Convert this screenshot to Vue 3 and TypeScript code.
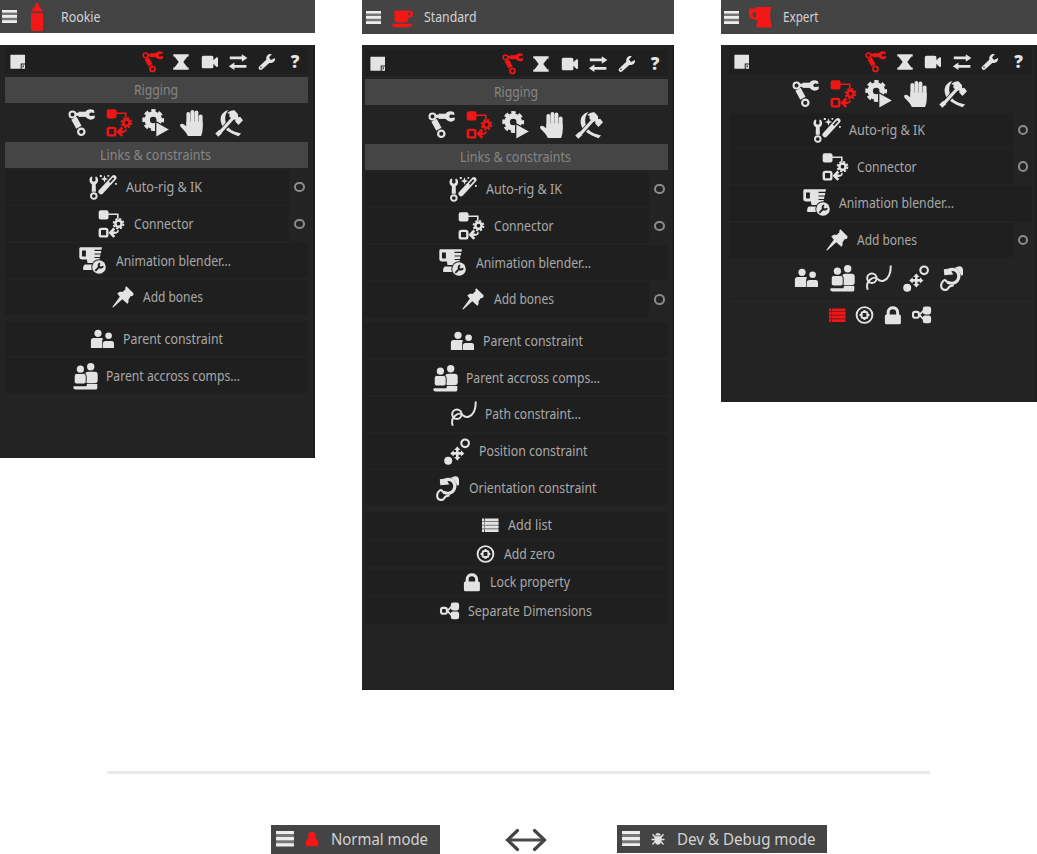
<script setup lang="ts">
interface Label { text: string; width: number }
interface Row extends Label { icon: string; option?: boolean }
interface Panel {
  key: string
  title: Label
  sections: boolean
  rows: Row[]
  constraints: Row[]
  tools: Row[]
  compact: boolean
}

const rigging: Label = { text: 'Rigging', width: 44 }
const links: Label = { text: 'Links & constraints', width: 111 }

const tabs = ['arm', 'hourglass', 'camera', 'swap', 'wrench']
const categories = ['arm', 'connector', 'gearplay', 'hand', 'hammer']

const mainRows = (bonesOption: boolean): Row[] => [
  { icon: 'autorig', text: 'Auto-rig & IK', width: 76, option: true },
  { icon: 'connector', text: 'Connector', width: 59.5, option: true },
  { icon: 'blender', text: 'Animation blender...', width: 115 },
  { icon: 'pin', text: 'Add bones', width: 60, option: bonesOption },
]

const constraintRows: Row[] = [
  { icon: 'parents', text: 'Parent constraint', width: 100 },
  { icon: 'across', text: 'Parent accross comps...', width: 134 },
  { icon: 'path', text: 'Path constraint...', width: 96 },
  { icon: 'position', text: 'Position constraint', width: 108.5 },
  { icon: 'orientation', text: 'Orientation constraint', width: 127.5 },
]

const toolRows: Row[] = [
  { icon: 'list', text: 'Add list', width: 44 },
  { icon: 'zero', text: 'Add zero', width: 51 },
  { icon: 'lock', text: 'Lock property', width: 80 },
  { icon: 'separate', text: 'Separate Dimensions', width: 124 },
]

const panels: Panel[] = [
  { key: 'rookie', title: { text: 'Rookie', width: 39.5 }, sections: true, rows: mainRows(false), constraints: constraintRows.slice(0, 2), tools: [], compact: false },
  { key: 'standard', title: { text: 'Standard', width: 52.5 }, sections: true, rows: mainRows(true), constraints: constraintRows, tools: toolRows, compact: false },
  { key: 'expert', title: { text: 'Expert', width: 35.5 }, sections: false, rows: mainRows(true), constraints: constraintRows, tools: toolRows, compact: true },
]
</script>

<template>
  <svg class="defs" aria-hidden="true">
    <symbol id="menu" viewBox="0 0 15 13"><path fill="currentColor" opacity=".3" d="M0 2h15v9H0z" /><path fill="currentColor" d="M0 0h15v2.600H0zM0 5h15v2.800H0zM0 10.200h15v2.800H0z" /></symbol>
    <symbol id="rookie" viewBox="0 0 24 30"><path fill="currentColor" d="M12 1c1.600 0 2.300 1.200 2 2.500 0 1.200.5 2 1.600 2.700 1.300.9 2 1.700 2 3.300H6.400c0-1.600.7-2.400 2-3.300C9.500 5.500 10 4.700 10 3.500 9.700 2.200 10.400 1 12 1zM7.500 11h9c1.100 0 1.500.7 1.500 1.500v15c0 .9-.6 1.500-1.500 1.500h-9C6.600 29 6 28.400 6 27.500v-15c0-.8.400-1.500 1.500-1.500z" /></symbol>
    <symbol id="standard" viewBox="0 0 24 30"><path fill="currentColor" fill-rule="evenodd" d="M3.500 8.500h14.200c2.900 0 4.400 1.300 4.400 3.500s-1.700 3.700-4.800 3.700v1.300c0 2.200-1.400 3.500-3.500 3.500H7c-2.200 0-3.500-1.300-3.500-3.500zM17.300 10.800v2.600c1.500 0 2.300-.4 2.300-1.300s-.8-1.300-2.300-1.300zM.8 21.800h20.500c-.4 2.400-1.800 3.500-3.600 3.500H4.400c-1.800 0-3.100-1.100-3.600-3.500z" /></symbol>
    <symbol id="expert" viewBox="0 0 24 30"><path fill="currentColor" fill-rule="evenodd" d="M0 6.500c3.500.3 5 0 6.500-.3l.5-1.200h15v3h-.7v10.500l1.200 4v3H7.500v-3l1.200-4-5-1.500C1.200 16.200 0 14.500 0 11.500zM3.700 10v3c0 1.500.4 2 1.700 2.300l1.600.4V10z" /></symbol>

    <symbol id="arm" viewBox="0 0 28 28">
      <g fill="none" stroke="currentColor">
        <circle cx="4.500" cy="5.500" r="3" stroke-width="2" /><circle cx="13.300" cy="22.800" r="3.200" stroke-width="2.200" />
        <path stroke-width="6" d="M6 9.300l4.900 9" /><path stroke-width="3.200" d="M7.500 5.300h4" /><path stroke-width="5.200" d="M10.500 5.300h8.500" />
      </g>
      <path fill="currentColor" d="M26 1.200C23-.6 18.500 0 17.300 3.500v3.600c1.400 3.600 6.300 4.800 9.400 2l.1-2.700-3.500.7c-2.600-.1-2.700-3.400-.1-3.700l3.300.6z" />
    </symbol>
    <symbol id="connector" viewBox="0 0 28 28">
      <rect x="1.700" y=".3" width="9.800" height="9.300" rx="2" fill="currentColor" />
      <g fill="none" stroke="currentColor">
        <rect x="2.800" y="18.900" width="7.500" height="7.500" rx="1.500" stroke-width="2.400" />
        <path stroke-width="1.600" d="M11 4.200h9.800v4.500M14 22.700h4.500q2.200 0 2.800-2.500" /><path stroke-width="2.600" d="M17.300 18.500l-4 4.200 4 4.200M14 22.700h4.500" />
        <circle cx="21.500" cy="13.700" r="3.100" stroke-width="2.500" /><circle cx="21.500" cy="13.700" r="4.900" stroke-width="1.900" stroke-dasharray="2.200 1.648" />
      </g>
    </symbol>
    <symbol id="gearplay" viewBox="0 0 28 28">
      <g fill="none" stroke="currentColor"><circle cx="11.200" cy="11" r="6" stroke-width="5.400" /><circle cx="11.200" cy="11" r="9.300" stroke-width="3.200" stroke-dasharray="4.300 3.004" stroke-dashoffset="2.150" /></g>
      <path d="M13.700 12.500L28 20.500l-14.300 8z" fill="currentColor" stroke="#222" stroke-width="1.300" />
    </symbol>
    <symbol id="hand" viewBox="0 0 28 28">
      <g fill="none" stroke="currentColor" stroke-width="3.800" stroke-linecap="round"><path d="M10.300 4.800V18M14.400 2.800V18M18.500 3.400V18M22.700 7.300V18" /></g>
      <path fill="currentColor" d="M8.400 12.500h16.200v7.500c0 3-.7 4.500-1.500 7H9.900c-1.300-2.800-3-4.500-5.400-7.200-1.800-1.800-2.900-3.300-2.200-4.400.8-1.100 2.600-.7 4 .4l2.100 1.800z" />
    </symbol>
    <symbol id="hammer" viewBox="0 0 28 28">
      <path d="M13.500 1C6.500 2.700 4.500 8.500 6.200 14.200c1.800 6 8.600 9.700 17.400 13l2.500-2.900c-5.100-1-12-3-14.500-8.600C9.300 10.500 9.800 5 13.500 1z" fill="currentColor" />
      <g fill="none"><path stroke="#222" stroke-width="5" d="M6 22.800L18 9" /><path stroke="currentColor" stroke-width="3.200" d="M5 23.300L18.500 8.500" /><path stroke="currentColor" stroke-width="4.500" d="M1.800 26.200l4-3.800" /></g>
      <path d="M12.200 4.100C14 2.200 17 1 19.400 1.200l3.500 3.800.3 3.200 2-.4 2.800 3.500-4.500 4.600-3.300-3.300.3-2.200-3.400.2-2.900-3.300.5-2.200z" fill="currentColor" />
    </symbol>
    <symbol id="autorig" viewBox="0 0 28 28">
      <path fill="currentColor" d="M2.300 3.600C-.2 5.200-.2 9.800 2.900 11.300l-.2 7.500h4.200l-.2-7.500C9.700 9.800 9.800 5.200 7.300 3.600l-1 .3.300 3.700c-.9 1.500-2.700 1.500-3.600 0l.3-3.700z" />
      <g fill="none" stroke="currentColor"><circle cx="4.800" cy="23" r="2.800" stroke-width="1.900" /><path stroke-width="5.200" stroke-linecap="round" d="M12 18.700L24.900 4.700" /></g>
      <path d="M20.500 9.400l4.200-4.500" stroke="#222" stroke-width="1.700" />
      <path fill="currentColor" d="M15.500 2.300l1 2.700 2.700 1-2.700 1-1 2.700-1-2.700-2.700-1 2.700-1zM10.800 2h2v2h-2zM18.500 2h1.700v1.700h-1.700zM26 10h1.800v1.800H26z" />
    </symbol>
    <symbol id="blender" viewBox="0 0 28 28">
      <path fill="currentColor" fill-rule="evenodd" d="M1.800.3H23l-.5 2.500h-7v1.200h6.800l-.5 2.400h-6.300v1.200h6l-.5 2.300h-5.500v1.200h5.300l-1 4.900H8.500l-.6-3.600H3C1.200 12.400.3 11.500.3 9.800V2C.3.900.8.300 1.800.3zM3 3.500v5.200c0 .5.2.8.7.8h3.200v-6zM6 17.400h9.500v5.500H4.300c-.5-2.400 0-4.700 1.700-5.500z" />
      <circle cx="20" cy="20" r="7.700" fill="#222" /><circle cx="20" cy="20" r="6.800" fill="currentColor" />
      <path fill="none" stroke="#222" stroke-width="1.900" d="M16.300 23.800l4.800-4.900M21.200 16.300a2.200 2.200 0 1 0 2.700 2.700" />
    </symbol>
    <symbol id="pin" viewBox="-1 0 28 28"><path fill="currentColor" d="M18.300 3.300l7.200 7c.3 2.200-1 3-2.700 2.800l-2.300 3.300c.4 2.600-.3 3.600-1.200 4.300l-5-4.400L5.200 24.500l-.9-.5 7.500-10.300-2.500-3.200c1.700-1.800 3.300-2.100 5.200-1.500l3-2.800c-.4-1.200-.1-2.200.8-2.900z" /></symbol>
    <symbol id="parents" viewBox="-1.500 0 28 28"><g fill="currentColor"><circle cx="9.500" cy="8.300" r="3.600" /><circle cx="20.100" cy="10.800" r="3.300" /><path d="M5 13h8.700c.5 0 .8.500.5 1.200-.5 1-.6 2-.6 3.800v5H2.400v-7C2.400 14 3.300 13 5 13zM17 16.100h6.200c1.600 0 2.300.9 2.300 2.400V23H14.300v-4.500c0-1.500 1.100-2.400 2.700-2.400z" /></g></symbol>
    <symbol id="across" viewBox="-1.500 0 28 28">
      <g fill="currentColor"><circle cx="19.200" cy="4.800" r="3.700" /><rect x="13.700" y="9.700" width="12.500" height="11.500" rx="3" /><circle cx="8.900" cy="7.200" r="3.600" /><rect x="2.700" y="11.500" width="12" height="10.500" rx="2.500" stroke="#222" stroke-width="1" /><path d="M16 22h9.800v3.700c0 1.200-.6 1.800-1.700 1.800H4c-1.400 0-2.200-.9-2.200-2.400 0-.6.4-.9 1-.9h11.700c.6 0 .7-.4.7-1 0-.7.200-1.200.8-1.200z" /></g>
    </symbol>
    <symbol id="path" viewBox="0 0 28 28"><g fill="none" stroke="currentColor" stroke-width="2"><circle cx="7.900" cy="14.300" r="4.700" /><path d="M3.700 25.700C2.300 21.500 3.200 18.500 5.500 16.200 9 13 11 12.800 13.500 15c2.200 2 4 2.300 6 1.700C24 15.300 26.800 10 26.800 1.500" /></g></symbol>
    <symbol id="position" viewBox="-.5 0 28 28"><circle cx="5.700" cy="23.800" r="4" fill="currentColor" /><circle cx="22.600" cy="6.300" r="3.800" fill="none" stroke="currentColor" stroke-width="2.100" /><path fill="currentColor" d="M14.800 9.400l3.200 3.500h-1.900v2.200h2.300v-1.900l3.400 3.200-3.400 3.200v-1.900h-2.300v2.200H18l-3.200 3.500-3.200-3.500h1.900v-2.200h-2.300v1.900l-3.400-3.200 3.400-3.200v1.900h2.300v-2.200h-1.900z" /></symbol>
    <symbol id="orientation" viewBox="-.5 0 28 28">
      <path fill="currentColor" d="M17 3.800l4.500-1.600c2.300-.3 4 1.300 4 3.600V11l-2 .8C22.400 8.500 20.800 5.500 17 3.800z" />
      <path fill="none" stroke="currentColor" stroke-width="3.100" d="M11.200 6.400C15 4.500 19.700 5.300 21 10c1.400 5-1.900 9-6 9.300-2 .1-3.300-.2-4.900-1.200" />
      <path fill="currentColor" d="M6.300 5.200l6.200-.8 3.200 6.200-8.900.6z" />
      <path fill="none" stroke="currentColor" stroke-width="2.100" d="M7.500 15.700c-3.200 2-4.300 4.300-3.700 7.300.4 2.300 3 3.300 5.300 2.700 1.600-.4 1.700-2.400 3-3.200l4-1.200M7.500 15.700l3.400 3.700" />
    </symbol>

    <symbol id="list" viewBox="0 0 22 22"><path fill="currentColor" d="M4 4.500h2.300v2.600H4zM7 4.500h13.500v2.600H7zM4 8.100h2.300v2.600H4zM7 8.100h13.500v2.600H7zM4 11.700h2.300v2.600H4zM7 11.700h13.500v2.600H7zM4 15.300h2.300v2.600H4zM7 15.300h13.500v2.600H7z" /><path fill="currentColor" opacity=".45" d="M4 7h16.500v8.500H4z" /></symbol>
    <symbol id="zero" viewBox="0 0 22 22"><g fill="none" stroke="currentColor"><circle cx="11.500" cy="11" r="7.900" stroke-width="1.900" /><rect x="8.600" y="8.100" width="5.800" height="5.800" rx="1.500" stroke-width="2" /><path stroke-width="2" d="M11.500 6v1.500M11.500 14.500V16M6.500 11H8M15 11h1.500" /></g></symbol>
    <symbol id="lock" viewBox="0 0 22 22"><rect x="3.900" y="10.500" width="16" height="9.700" rx="1.500" fill="currentColor" /><path fill="none" stroke="currentColor" stroke-width="3" d="M7.200 11V8c0-5.700 9.400-5.700 9.400 0v3" /></symbol>
    <symbol id="separate" viewBox="0 0 22 22"><g fill="currentColor"><rect x="12.800" y="2.500" width="8.300" height="7.900" rx="2.300" /><rect x="12.800" y="11.400" width="8.300" height="7.900" rx="2.300" /></g><g fill="none" stroke="currentColor"><rect x="3" y="7.900" width="5.900" height="5.900" rx="2" stroke-width="2.100" /><path stroke-width="1.700" d="M9.300 10.900l4.200-4.300M9.300 10.900l4.200 4.300" /></g></symbol>

    <symbol id="note" viewBox="0 0 22 22"><path fill="currentColor" d="M4 3.700h14v8.800h-4.300v5.300H4c-.4 0-.6-.2-.6-.6V4.300c0-.4.200-.6.600-.6zM14.700 13.500H18v4.200h-3.300z" /><path fill="#222" d="M15.600 14.400H17v1.100l-1.400 1.300z" /></symbol>
    <symbol id="hourglass" viewBox="0 0 22 22"><path fill="currentColor" d="M3.300 3.300h15.400v2.200h-1.200L13.300 11l4.200 5.500h1.200v2.200H3.300v-2.200h1.200L8.700 11 4.500 5.500H3.300z" /></symbol>
    <symbol id="camera" viewBox="0 0 22 22"><path fill="currentColor" d="M4.500 4.800h8c1.200 0 1.900.7 1.900 1.900v2.600l2.900-2.800c.8-.6 1.700-.4 1.700.6v8c0 1-.9 1.200-1.700.6l-2.900-2.900v2.600c0 1.200-.7 1.900-1.900 1.900H4.700c-1.200 0-1.900-.7-1.900-1.900V6.600c0-1.100.6-1.800 1.700-1.800z" /></symbol>
    <symbol id="swap" viewBox="0 0 22 22"><path fill="currentColor" d="M2.800 5.600h12V3.300l5.600 3.700-5.600 3.700V8.300h-12zM19.400 16.700h-12V19l-5.600-3.700 5.600-3.700V14h12z" /></symbol>
    <symbol id="wrench" viewBox="0 0 22 22"><path fill="currentColor" fill-rule="evenodd" d="M15.800 3.200l-2.800 3.200 2 2.500 4-1.900c.6 3.200-1.900 5.500-5.700 4.900l-7 6.300c-1 .9-2.100.9-3 .1-.9-.9-.8-2.100.1-3.100l6.900-6.500c-.6-3.500 1.800-6.500 5.500-5.500zM5 15.500a.8.800 0 1 0 0 1.600.8.800 0 0 0 0-1.600z" /></symbol>
    <symbol id="user" viewBox="0 0 14 16"><path fill="currentColor" d="M7 .7a4 4 0 0 1 3.700 5.400c-.4 1-.4 1.500.7 2.200 1.400.9 2.200 2.200 2.100 4.700 0 1.700-.8 2.300-2.500 2.300H3C1.300 15.300.5 14.700.5 13c-.1-2.500.7-3.800 2.100-4.700 1.100-.7 1.100-1.200.7-2.200A4 4 0 0 1 7 .7z" /></symbol>
    <symbol id="bug" viewBox="0 0 14 14"><path fill="currentColor" d="M4.300 3.500C4.300 0 9.700 0 9.700 3.500zM3.500 4.300h7c.4 5-.7 8.400-3.500 8.400S3.100 9.300 3.500 4.300z" /><path fill="none" stroke="currentColor" stroke-width="1.300" d="M1.500 2.200l2.700 3M12.500 2.200l-2.700 3M.5 7.500h13M1.500 12.500l2.700-3M12.500 12.500l-2.700-3" /></symbol>
  </svg>

  <main class="page">
    <div class="panels">
      <section v-for="p in panels" :key="p.key" class="panel" :class="p.key">
        <header class="title">
          <svg class="menu"><use href="#menu" /></svg>
          <svg class="level"><use :href="`#${p.key}`" /></svg>
          <svg class="label" :width="p.title.width" height="20"><text y="15" :textLength="p.title.width" lengthAdjust="spacingAndGlyphs">{{ p.title.text }}</text></svg>
        </header>
        <div class="body">
          <nav class="toolbar">
            <svg class="small"><use href="#note" /></svg>
            <span class="spacer"></span>
            <svg v-for="(t, i) in tabs" :key="t" class="small" :class="{ active: i === 0 }"><use :href="`#${t}`" /></svg>
            <span class="help">?</span>
          </nav>
          <div v-if="p.sections" class="section">
            <svg class="label" :width="rigging.width" height="20"><text y="15" :textLength="rigging.width" lengthAdjust="spacingAndGlyphs">{{ rigging.text }}</text></svg>
          </div>
          <div class="categories">
            <svg v-for="(c, i) in categories" :key="c" class="big" :class="{ active: i === 1 }"><use :href="`#${c}`" /></svg>
          </div>
          <div v-if="p.sections" class="section">
            <svg class="label" :width="links.width" height="20"><text y="15" :textLength="links.width" lengthAdjust="spacingAndGlyphs">{{ links.text }}</text></svg>
          </div>
          <div class="rows">
            <div v-for="r in p.rows" :key="r.text" class="row">
              <div class="button">
                <svg class="big"><use :href="`#${r.icon}`" /></svg>
                <svg class="label" :width="r.width" height="20"><text y="15" :textLength="r.width" lengthAdjust="spacingAndGlyphs">{{ r.text }}</text></svg>
              </div>
              <span v-if="r.option" class="option"><i></i></span>
            </div>
          </div>
          <template v-if="!p.compact">
            <div class="rows group">
              <div v-for="r in p.constraints" :key="r.text" class="row">
                <div class="button">
                  <svg class="big"><use :href="`#${r.icon}`" /></svg>
                  <svg class="label" :width="r.width" height="20"><text y="15" :textLength="r.width" lengthAdjust="spacingAndGlyphs">{{ r.text }}</text></svg>
                </div>
              </div>
            </div>
            <div v-if="p.tools.length" class="rows tools">
              <div v-for="r in p.tools" :key="r.text" class="row">
                <div class="button">
                  <svg class="small"><use :href="`#${r.icon}`" /></svg>
                  <svg class="label" :width="r.width" height="20"><text y="15" :textLength="r.width" lengthAdjust="spacingAndGlyphs">{{ r.text }}</text></svg>
                </div>
              </div>
            </div>
          </template>
          <template v-else>
            <div class="iconrow"><svg v-for="r in p.constraints" :key="r.text" class="big"><use :href="`#${r.icon}`" /></svg></div>
            <div class="iconrow minor"><svg v-for="(r, i) in p.tools" :key="r.text" class="small" :class="{ active: i === 0 }"><use :href="`#${r.icon}`" /></svg></div>
          </template>
        </div>
      </section>
    </div>

    <hr class="divider" />

    <footer class="modes">
      <div class="chip normal">
        <svg class="menu"><use href="#menu" /></svg>
        <svg class="user"><use href="#user" /></svg>
        <svg class="label" width="97" height="22"><text y="16.500" textLength="97" lengthAdjust="spacingAndGlyphs">Normal mode</text></svg>
      </div>
      <svg class="exchange" viewBox="0 0 42 24"><path fill="none" stroke="#4a4a4a" stroke-width="3" d="M2.500 12h37" /><path fill="none" stroke="#444" stroke-width="3.200" stroke-linecap="round" d="M12.500 2.500L2.500 12l10 9.500M29.500 2.500l10 9.500-10 9.500" /></svg>
      <div class="chip debug">
        <svg class="menu"><use href="#menu" /></svg>
        <svg class="bug"><use href="#bug" /></svg>
        <svg class="label" width="138.500" height="22"><text y="16.500" textLength="138.500" lengthAdjust="spacingAndGlyphs">Dev &amp; Debug mode</text></svg>
      </div>
    </footer>
  </main>
</template>

<style scoped>
.defs { position: absolute; width: 0; height: 0; }
.page { width: 1037px; height: 854px; overflow: hidden; background: #fff; color: #e3e3e3; font-family: "Noto Sans", "Open Sans", sans-serif; display: flex; flex-direction: column; }
svg { display: block; flex: none; }
symbol { overflow: visible; }
.panels { display: flex; gap: 47px; height: 771px; align-items: flex-start; }
.rookie { width: 315px; }
.standard { width: 312px; }
.expert { width: 316px; }
.title { display: flex; align-items: center; height: 34px; background: #444; box-sizing: border-box; }
.menu { width: 15px; height: 13px; color: #ededed; }
.level { width: 24px; height: 30px; color: #f31717; }
.label { overflow: visible; }
.label text { font-size: 14px; fill: #a9a9a9; }
.title .label text { fill: #d2d2d2; font-size: 13.500px; }
.rookie .title { height: 33px; padding-left: 2px; gap: 8px; }
.rookie .title .label { margin-left: 3.500px; }
.standard .title { padding-left: 4px; gap: 10px; }
.standard .title .label { margin-left: -1px; }
.expert .title { padding-left: 3px; gap: 10px; }
.body { box-sizing: border-box; background: #232323; border-right: 2px solid #1d1d1d; }
.rookie .body { height: 413px; margin-top: 12px; padding: 2px 5px 0 5px; }
.standard .body { height: 645px; margin-top: 11px; padding: 4px 4px 0 3px; }
.expert .body { height: 357px; margin-top: 11px; padding: 2px 3px 0 7.500px; }
.toolbar, .section, .categories, .rows, .iconrow { width: 303px; box-sizing: border-box; }
.toolbar { height: 30px; display: flex; align-items: center; gap: 6.500px; padding: 0 2px 1px 2px; background: linear-gradient(#1f1f1f, #1f1f1f) 0 0 / 100% 27px no-repeat; }
.spacer { flex: 1; }
.help { width: 22px; text-align: center; font-size: 17px; line-height: 22px; font-weight: 900; }
.small { width: 22px; height: 22px; }
.big { width: 28px; height: 28px; }
.active { color: #f01616; }
.section { height: 26px; background: #454545; display: flex; align-items: center; justify-content: center; padding: 0 2px 1px 0; }
.section .label text { fill: #868686; }
.categories { height: 39px; display: flex; align-items: center; justify-content: center; gap: 8.700px; padding-right: 1.500px; }
.expert .categories { height: 35px; padding-bottom: 1px; }
.rows { display: flex; flex-direction: column; gap: 1.700px; margin-top: 1.700px; }
.expert .rows { margin-top: .5px; }
.row { height: 35px; display: flex; }
.button { flex: 1; display: flex; align-items: center; justify-content: center; background: #1f1f1f; padding-right: 3.500px; }
.button .label { margin-left: 8.500px; }
.option { width: 19px; display: flex; align-items: center; justify-content: center; }
.option i { box-sizing: border-box; width: 10.500px; height: 10.500px; margin-left: 1.500px; border: 2.600px solid #8c8c8c; border-radius: 50%; }
.group { margin-top: 6.700px; }
.tools { margin-top: 6.500px; gap: 1.500px; }
.tools .row { height: 27px; }
.tools .label { margin-left: 8px; }
.iconrow { height: 40px; display: flex; align-items: center; justify-content: center; gap: 8.700px; padding-right: 4px; }
.minor { height: 34px; gap: 6.400px; padding-right: 3.500px; border-top: 1.500px solid #1d1d1d; }
.divider { width: 823px; height: 3px; margin: 0 0 0 107px; border: 0; background: #eaeaea; flex: none; }
.modes { display: flex; align-items: flex-start; margin-top: 51px; padding-left: 271px; }
.chip { display: flex; align-items: center; height: 29px; background: #444; box-sizing: border-box; padding: 0 0 1px 5px; }
.chip .menu { width: 18px; height: 15.500px; }
.chip .label text { fill: #d2d2d2; font-size: 16px; }
.normal { width: 169px; }
.debug { width: 210px; height: 28px; margin-left: 70px; }
.user { width: 14px; height: 16px; margin: 0 11.500px 0 11px; color: #f31717; }
.bug { width: 14px; height: 14px; margin: 0 11.500px 0 11px; }
.exchange { width: 42px; height: 24px; margin: 3px 0 0 65px; }
</style>

<style>
html, body { background: #fff; }
body { overflow: hidden; }
</style>
